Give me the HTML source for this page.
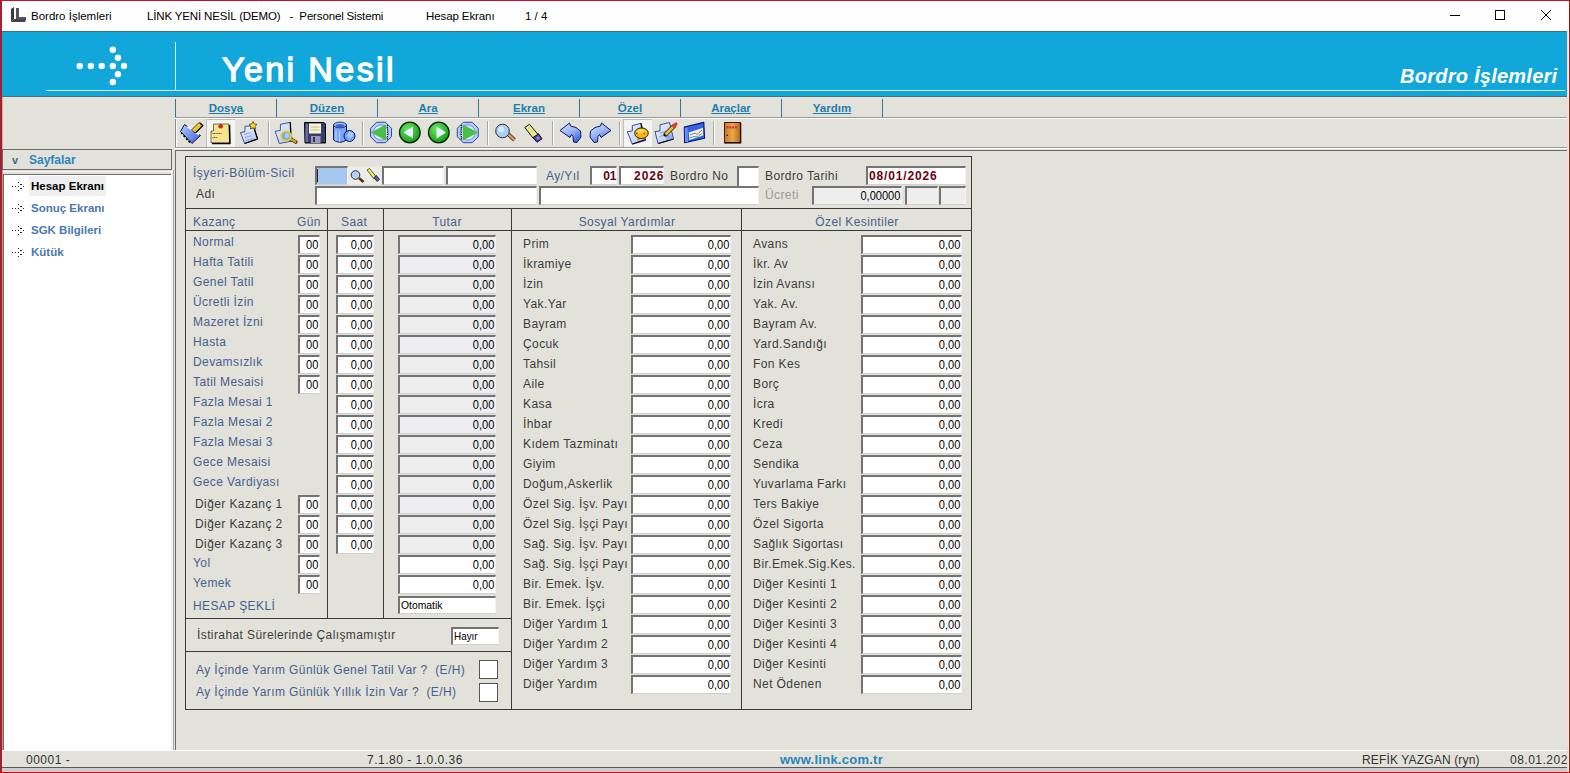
<!DOCTYPE html>
<html><head><meta charset="utf-8"><style>
html,body{margin:0;padding:0;width:1570px;height:773px;overflow:hidden;background:#E2E2DA;font-family:"Liberation Sans",sans-serif;}
.t,.v,.b,.in{position:absolute;white-space:nowrap;}
.t{line-height:1;}
.v{line-height:17px;height:17px;}
.in{border-top:2px solid #737373;border-left:2px solid #737373;border-bottom:1px solid #d0d0d0;border-right:1px solid #f2f2f2;}
</style></head><body>

<div class="b" style="left:0px;top:0px;width:1570px;height:31px;background:#fff"></div>
<svg style="position:absolute;left:10px;top:7px" width="17" height="16" viewBox="0 0 17 16"><path d="M1 2 L4 0 L4 12 L1 15 Z" fill="#3a3a3a"/><path d="M6 1 L9 1 L9 10 L16 10 L16 13 L6 13 Z" fill="#555"/><path d="M1 15 L4 12 L16 12 L15 15 Z" fill="#444"/></svg>
<div class="t " style="left:31px;top:11px;font-size:11.5px;color:#000;font-weight:normal;letter-spacing:0px;">Bordro İşlemleri</div>
<div class="t " style="left:147px;top:11px;font-size:11.5px;color:#000;font-weight:normal;letter-spacing:-0.15px;">LİNK YENİ NESİL (DEMO)&nbsp;&nbsp; -&nbsp; Personel Sistemi</div>
<div class="t " style="left:426px;top:11px;font-size:11.5px;color:#000;font-weight:normal;letter-spacing:-0.1px;">Hesap Ekranı</div>
<div class="t " style="left:525px;top:11px;font-size:11.5px;color:#000;font-weight:normal;letter-spacing:0px;">1 / 4</div>
<div class="b" style="left:1450px;top:15px;width:10px;height:1px;background:#000"></div>
<div class="b" style="left:1495px;top:10px;width:8px;height:8px;border:1px solid #000"></div>
<svg style="position:absolute;left:1541px;top:10px" width="11" height="11" viewBox="0 0 11 11"><path d="M0 0 L10 10 M10 0 L0 10" stroke="#000" stroke-width="1"/></svg>
<div class="b" style="left:0px;top:31px;width:1570px;height:1px;background:#3d6f86"></div>
<div class="b" style="left:0px;top:32px;width:1570px;height:64px;background:#11A7DA"></div>
<div class="b" style="left:46px;top:90px;width:1519px;height:1px;background:#C4F8FF"></div>
<div class="b" style="left:46px;top:91px;width:1519px;height:1px;background:#2A98BC"></div>
<div class="b" style="left:2px;top:96px;width:1566px;height:1px;background:#4E6E7A"></div>
<div class="b" style="left:175px;top:42px;width:1px;height:48px;background:#D8F8FF"></div>
<svg style="position:absolute;left:0;top:0" width="200" height="96"><circle cx="79.7" cy="66" r="3.2" fill="#fff"/><circle cx="90.8" cy="66" r="3.2" fill="#fff"/><circle cx="101.7" cy="66" r="3.2" fill="#fff"/><circle cx="112.8" cy="66" r="3.2" fill="#fff"/><circle cx="124" cy="66" r="3.2" fill="#fff"/><circle cx="112.8" cy="49.7" r="3.2" fill="#fff"/><circle cx="117.9" cy="57.8" r="3.2" fill="#fff"/><circle cx="117.9" cy="74.3" r="3.2" fill="#fff"/><circle cx="112.8" cy="82" r="3.2" fill="#fff"/></svg>
<div class="t" style="left:222px;top:52px;font-size:34px;color:#fff;font-weight:normal;letter-spacing:2.4px;-webkit-text-stroke:1.3px #fff;line-height:1">Yeni Nesil</div>
<div class="t " style="left:1400px;top:66px;font-size:20px;color:#fff;font-weight:bold;letter-spacing:0.25px;font-style:italic">Bordro İşlemleri</div>
<div class="b" style="left:2px;top:97px;width:1566px;height:20px;background:#E2E2DA"></div>
<div class="b" style="left:175px;top:117px;width:1393px;height:1px;background:#9a9a9a"></div>
<div class="b" style="left:175px;top:118px;width:1393px;height:1px;background:#ffffff"></div>
<div class="b" style="left:175px;top:99px;width:1px;height:18px;background:#2F7896"></div>
<div class="b" style="left:276px;top:99px;width:1px;height:18px;background:#2F7896"></div>
<div class="b" style="left:377px;top:99px;width:1px;height:18px;background:#2F7896"></div>
<div class="b" style="left:478px;top:99px;width:1px;height:18px;background:#2F7896"></div>
<div class="b" style="left:579px;top:99px;width:1px;height:18px;background:#2F7896"></div>
<div class="b" style="left:680px;top:99px;width:1px;height:18px;background:#2F7896"></div>
<div class="b" style="left:781px;top:99px;width:1px;height:18px;background:#2F7896"></div>
<div class="b" style="left:882px;top:99px;width:1px;height:18px;background:#2F7896"></div>
<div class="t" style="left:176px;width:100px;text-align:center;top:103px;font-size:11.5px;font-weight:bold;color:#1F7DAE;text-decoration:underline">Dosya</div>
<div class="t" style="left:277px;width:100px;text-align:center;top:103px;font-size:11.5px;font-weight:bold;color:#1F7DAE;text-decoration:underline">Düzen</div>
<div class="t" style="left:378px;width:100px;text-align:center;top:103px;font-size:11.5px;font-weight:bold;color:#1F7DAE;text-decoration:underline">Ara</div>
<div class="t" style="left:479px;width:100px;text-align:center;top:103px;font-size:11.5px;font-weight:bold;color:#1F7DAE;text-decoration:underline">Ekran</div>
<div class="t" style="left:580px;width:100px;text-align:center;top:103px;font-size:11.5px;font-weight:bold;color:#1F7DAE;text-decoration:underline">Özel</div>
<div class="t" style="left:681px;width:100px;text-align:center;top:103px;font-size:11.5px;font-weight:bold;color:#1F7DAE;text-decoration:underline">Araçlar</div>
<div class="t" style="left:782px;width:100px;text-align:center;top:103px;font-size:11.5px;font-weight:bold;color:#1F7DAE;text-decoration:underline">Yardım</div>
<div class="b" style="left:175px;top:119px;width:1393px;height:28px;background:#E2E2DA"></div>
<div class="b" style="left:175px;top:119px;width:1px;height:29px;background:#8a8a8a"></div>
<div class="b" style="left:176px;top:119px;width:1px;height:28px;background:#ffffff"></div>
<div class="b" style="left:175px;top:147px;width:1393px;height:1px;background:#9a9a9a"></div>
<div class="b" style="left:175px;top:148px;width:1393px;height:1px;background:#ffffff"></div>
<div class="b" style="left:268px;top:121px;width:1px;height:24px;background:#a8a8a8"></div>
<div class="b" style="left:269px;top:121px;width:1px;height:24px;background:#ffffff"></div>
<div class="b" style="left:362px;top:121px;width:1px;height:24px;background:#a8a8a8"></div>
<div class="b" style="left:363px;top:121px;width:1px;height:24px;background:#ffffff"></div>
<div class="b" style="left:487px;top:121px;width:1px;height:24px;background:#a8a8a8"></div>
<div class="b" style="left:488px;top:121px;width:1px;height:24px;background:#ffffff"></div>
<div class="b" style="left:552px;top:121px;width:1px;height:24px;background:#a8a8a8"></div>
<div class="b" style="left:553px;top:121px;width:1px;height:24px;background:#ffffff"></div>
<div class="b" style="left:619px;top:121px;width:1px;height:24px;background:#a8a8a8"></div>
<div class="b" style="left:620px;top:121px;width:1px;height:24px;background:#ffffff"></div>
<div class="b" style="left:713px;top:121px;width:1px;height:24px;background:#a8a8a8"></div>
<div class="b" style="left:714px;top:121px;width:1px;height:24px;background:#ffffff"></div>
<div class="b" style="left:206px;top:119px;width:28px;height:27px;background:#F4F4F2;border-left:1px solid #c0c0c0;border-top:1px solid #c0c0c0"></div>
<div class="b" style="left:623px;top:119px;width:28px;height:27px;background:#F4F4F2;border-left:1px solid #c0c0c0;border-top:1px solid #c0c0c0"></div>
<svg style="position:absolute;left:0;top:0" width="760" height="150" viewBox="0 0 760 150">
<defs>
<linearGradient id="gblue" x1="0" y1="0" x2="1" y2="1"><stop offset="0" stop-color="#B8CCFF"/><stop offset="1" stop-color="#3A5FD8"/></linearGradient>
<linearGradient id="gyel" x1="0" y1="0" x2="1" y2="1"><stop offset="0" stop-color="#FFE860"/><stop offset="1" stop-color="#E0A000"/></linearGradient>
<radialGradient id="ggreen" cx="0.4" cy="0.35" r="0.7"><stop offset="0" stop-color="#6AE86A"/><stop offset="1" stop-color="#109A10"/></radialGradient>
<radialGradient id="gring" cx="0.5" cy="0.5" r="0.5"><stop offset="0.75" stop-color="#C8D8F8"/><stop offset="1" stop-color="#4A6AD0"/></radialGradient>
<linearGradient id="gdoc" x1="0" y1="0" x2="1" y2="1"><stop offset="0" stop-color="#F4F8FF"/><stop offset="1" stop-color="#A8C0F0"/></linearGradient>
<linearGradient id="gdoor" x1="0" y1="0" x2="1" y2="0"><stop offset="0" stop-color="#C87818"/><stop offset="0.5" stop-color="#E8A848"/><stop offset="1" stop-color="#B86810"/></linearGradient>
</defs>
<!-- 1 brush -->
<path d="M184.5 124.5 L200.5 135.5 L192 143.5 L180.5 131.5 Z" fill="url(#gblue)" stroke="#101840" stroke-width="1"/>
<path d="M187.5 126.5 L199 134.5" stroke="#F4F8FF" stroke-width="1.8"/>
<path d="M181 132.5 L182.5 134 M183.5 135.5 L185 137 M186 138.5 L187.5 140 M188.5 141 L190 142.5" stroke="#000" stroke-width="1.6"/>
<path d="M191.5 130 L199 122.5 L202.5 125.5 L195 133 Z" fill="url(#gyel)" stroke="#201800" stroke-width="0.8"/>
<path d="M200 123 L202.8 125.6 L196 132.5" fill="none" stroke="#000" stroke-width="1.2"/>
<!-- 2 sticky note -->
<path d="M213.5 124 L229 124 L229.5 143 L211 143 L211 131 L213.5 131 Z" fill="#F6E48C" stroke="#222" stroke-width="0.6"/>
<path d="M229.5 125 L230 143.5 L212 143.5" fill="none" stroke="#000" stroke-width="1.5"/>
<circle cx="220.7" cy="126.3" r="2" fill="#E02818" stroke="#901008" stroke-width="0.5"/>
<path d="M212.5 133.5 L221.5 133.5 M212.5 137.5 L217.5 137.5" stroke="#333" stroke-width="0.9" stroke-dasharray="1 0.6"/>
<!-- 3 doc star -->
<path d="M240.5 132.5 L244.8 131.8 L245 126.3 L250 126 L254.4 129.2 L257.6 139 L244.6 143.5 Z" fill="url(#gdoc)" stroke="#3040A8" stroke-width="0.9" stroke-linejoin="round"/>
<path d="M254.4 129.2 L257.6 139 L244.6 143.5" fill="none" stroke="#000" stroke-width="1.3" stroke-linejoin="round"/>
<path d="M244 134.5 L251 132.5 M245 137.5 L252 135.5 M246 140.5 L253 138.5" stroke="#6878C8" stroke-width="0.9" stroke-dasharray="1.5 0.8"/>
<path d="M253 121.5 L254.2 124 L257 124.4 L255 126.3 L255.5 129 L253 127.7 L250.5 129 L251 126.3 L249 124.4 L251.8 124 Z" fill="#FFE020" stroke="#403000" stroke-width="0.7"/>
<!-- 4 doc magnifier -->
<path d="M275.2 131.2 L280.3 130.5 L280.5 124.3 L290.3 122.3 L290.8 134 L293 141 L279.3 143.5 Z" fill="url(#gdoc)" stroke="#3040A8" stroke-width="0.9" stroke-linejoin="round"/>
<path d="M290.3 122.3 L290.8 134" stroke="#000" stroke-width="1.3"/>
<path d="M289.5 138.5 L295.8 142" stroke="#3A2000" stroke-width="3.6" stroke-linecap="round"/>
<path d="M289.5 138.5 L295.5 141.8" stroke="#E8A030" stroke-width="2.2" stroke-linecap="round"/>
<ellipse cx="286" cy="136" rx="5" ry="4.6" fill="#78A8F0" stroke="#E8D020" stroke-width="1.8"/>
<ellipse cx="287" cy="135.5" rx="2.2" ry="2.6" fill="#A8D0FF"/>
<!-- 5 floppy -->
<path d="M304.5 122.5 L324 122.5 L325.5 124 L325.5 143 L305 143 Z" fill="#3A3A6C" stroke="#000" stroke-width="1"/><rect x="305.5" y="124" width="2.5" height="18" fill="#6A6AA8"/>
<rect x="309" y="123.5" width="12" height="10" fill="#F6F4D0"/>
<path d="M310.5 127 L319.5 127 M310.5 130 L319.5 130" stroke="#B0B080" stroke-width="0.8"/>
<rect x="311" y="136" width="9.5" height="7" fill="#9A9AB8"/>
<rect x="313" y="137" width="2" height="5" fill="#2C2C58"/>
<!-- 6 db globe -->
<path d="M333.5 125 L333.5 140 Q340 144.5 346.5 140 L346.5 125 Z" fill="#78A4FC" stroke="#0A1660" stroke-width="1"/>
<ellipse cx="340" cy="125" rx="6.5" ry="2.8" fill="#A8C4FF" stroke="#102060" stroke-width="0.9"/><ellipse cx="340" cy="125.6" rx="4.5" ry="1.6" fill="#3A60D8"/><path d="M336 130 L336 141 M339.5 131 L339.5 142" stroke="#C0D4FF" stroke-width="1"/>
<circle cx="349.5" cy="136" r="5.5" fill="#7098F4" stroke="#0A1660" stroke-width="1"/><circle cx="350.5" cy="135" r="2.8" fill="#A8D0FF"/>
<path d="M346 136 L353 136 M349.5 131 Q347 136 349.5 141 Q352 136 349.5 131" stroke="#B0C8FF" stroke-width="0.7" fill="none"/>
<!-- 7 first -->
<path d="M376.5 122.3 L385.5 122.3 L391.5 128.3 L391.5 136.7 L385.5 142.7 L376.5 142.7 L370.5 136.7 L370.5 128.3 Z" fill="#B8CCF4" stroke="#2A48B0" stroke-width="1"/>
<circle cx="381" cy="132.5" r="7.6" fill="#D8E4FA" stroke="#7890D8" stroke-width="1"/>
<path d="M370.8 132.5 L386 124.5 L386 140.5 Z" fill="#48C048"/>
<path d="M387.5 125 L387.5 140" stroke="#000" stroke-width="1.2" stroke-dasharray="1.2 1"/>
<!-- 8 prev -->
<circle cx="409.8" cy="132.5" r="10.3" fill="url(#ggreen)" stroke="#082808" stroke-width="1.3"/>
<path d="M403.5 132.5 L413 126.5 L413 138.5 Z" fill="#E8F0FF"/>
<!-- 9 next -->
<circle cx="438.8" cy="132.5" r="10.3" fill="url(#ggreen)" stroke="#082808" stroke-width="1.3"/>
<path d="M446 132.5 L436.5 126.5 L436.5 138.5 Z" fill="#E8F0FF"/>
<!-- 10 last -->
<path d="M463.3 122.3 L472.3 122.3 L478.3 128.3 L478.3 136.7 L472.3 142.7 L463.3 142.7 L457.3 136.7 L457.3 128.3 Z" fill="#B8CCF4" stroke="#2A48B0" stroke-width="1"/>
<circle cx="467.8" cy="132.5" r="7.6" fill="#D8E4FA" stroke="#7890D8" stroke-width="1"/>
<path d="M478 132.5 L462.8 124.5 L462.8 140.5 Z" fill="#48C048"/>
<path d="M461.3 125 L461.3 140" stroke="#000" stroke-width="1.2" stroke-dasharray="1.2 1"/>
<!-- 11 magnifier -->
<path d="M508 134 L514.5 140" stroke="#6A3A10" stroke-width="4"/>
<path d="M508 134 L514.5 140" stroke="#D8A070" stroke-width="2.2"/>
<circle cx="502.5" cy="131" r="6.8" fill="#A8D0F8" stroke="#303030" stroke-width="1"/>
<circle cx="501" cy="129.5" r="3" fill="#D8ECFF"/>
<!-- 12 flashlight -->
<path d="M524.8 127.5 L529.5 124.3 L538.3 134.8 L533.2 138.3 Z" fill="#F0F070" stroke="#101030" stroke-width="1" stroke-linejoin="round"/>
<path d="M527.5 129 L530 127.2 M530.5 132.5 L533.5 130.5" stroke="#C8B8F0" stroke-width="1"/>
<path d="M533 137.5 L538.5 133.8 L542 138.8 L537 142.3 Z" fill="#4A4AA0" stroke="#0A0A30" stroke-width="1" stroke-linejoin="round"/>
<circle cx="538" cy="138" r="1.5" fill="#9A9AB0"/>
<!-- 13 undo -->
<linearGradient id="garr" x1="0" y1="0" x2="0.6" y2="1"><stop offset="0" stop-color="#D4E6FF"/><stop offset="0.55" stop-color="#9AB8F8"/><stop offset="1" stop-color="#4A6AE0"/></linearGradient>
<path d="M560 130.5 L569.5 123 L570.5 126 L576 127.5 L580.5 131 L581 137 L577 142.5 L573.5 142 L573 136.5 L571.5 134.5 L570 137.5 Z" fill="url(#garr)" stroke="#0E1660" stroke-width="1" stroke-linejoin="round"/>
<!-- 14 redo -->
<path d="M611 130.5 L601.5 123 L600.5 126 L595 127.5 L590.5 131 L590 137 L594 142.5 L597.5 142 L598 136.5 L599.5 134.5 L601 137.5 Z" fill="url(#garr)" stroke="#0E1660" stroke-width="1" stroke-linejoin="round"/>
<!-- 15 printer speech -->
<path d="M627.3 131.6 L632.3 131 L632.3 125.6 L641 123.3 L642.2 127.4 L645.7 140.4 L632.3 144.2 Z" fill="url(#gdoc)" stroke="#2838A0" stroke-width="0.9" stroke-linejoin="round"/>
<path d="M641 123.3 L642.2 131" stroke="#000" stroke-width="1.2"/>
<path d="M645.5 139.5 L632.5 144" stroke="#000" stroke-width="1.3"/>
<path d="M638 137.5 L637 141 L641 138.5 Z" fill="#E08010"/>
<ellipse cx="641.5" cy="133.2" rx="6.8" ry="5.3" fill="#F8B818" stroke="#201000" stroke-width="0.9"/>
<ellipse cx="641" cy="131.5" rx="4" ry="2.2" fill="#FFE040"/>
<rect x="636" y="132.5" width="1.6" height="1.8" fill="#C05000"/><rect x="643.3" y="132.5" width="1.6" height="1.8" fill="#C05000"/>
<!-- 16 doc pencil -->
<path d="M655 131.5 L660 131 L660 124.8 L669.5 122.5 L673.5 139 L658 143.5 Z" fill="url(#gdoc)" stroke="#2838A0" stroke-width="0.9" stroke-linejoin="round"/>
<path d="M673.5 139 L658.5 143.5" stroke="#000" stroke-width="1.3"/>
<rect x="666" y="135" width="6" height="4.5" fill="#90A8F0" transform="rotate(-15 669 137)"/>
<path d="M660 133 L666 131.5 M659.5 136.5 L665 135" stroke="#7090D0" stroke-width="0.8"/>
<path d="M665.5 134.5 L674 126" stroke="#1A1000" stroke-width="4.2" stroke-linecap="round"/>
<path d="M665.5 134.5 L674 126" stroke="#F0C020" stroke-width="2.8"/>
<path d="M673.8 126.2 L676 124" stroke="#E83838" stroke-width="3.2" stroke-linecap="round"/>
<!-- 17 window -->
<path d="M684.3 127 L703.8 122.4 L704.6 138.3 L684.6 142.6 Z" fill="#3462E4" stroke="#0A1470" stroke-width="1.1" stroke-linejoin="round"/>
<path d="M684.8 128 L687.5 127.5 L688 141.8 L685 142.3 Z" fill="#6A90F8"/>
<path d="M688.8 132.4 L703 127.8 L703.2 135.6 L689.5 140 Z" fill="#E8F4FF"/>
<path d="M690 135 L695 133 L697 134.5 L702 130" stroke="#E05878" stroke-width="1" fill="none"/>
<path d="M690 138 L694 136.5 L697 137 L702 133.5" stroke="#40B060" stroke-width="1" fill="none"/>
<!-- 18 exit door -->
<rect x="724.5" y="122.5" width="16" height="20.5" fill="url(#gdoor)" stroke="#3A1C00" stroke-width="1"/>
<path d="M725 142.6 L740.6 142.6 L740.6 123" fill="none" stroke="#201000" stroke-width="1.4"/>
<path d="M726.5 127.3 L737.5 127.3" stroke="#D83048" stroke-width="2.2" stroke-dasharray="2 0.8"/>
<rect x="726.5" y="134.5" width="1.5" height="1.5" fill="#4A2A00"/>
</svg>
<svg style="position:absolute;left:0;top:0" width="400" height="200" viewBox="0 0 400 200">
<rect x="348" y="166.5" width="16.5" height="18" fill="#ECECE8"/>
<rect x="365" y="166.5" width="16.5" height="18" fill="#ECECE8"/>
<path d="M359 178 L363.5 182" stroke="#5A3010" stroke-width="2.6"/>
<circle cx="355.5" cy="175" r="4.3" fill="#B0D4F8" stroke="#202020" stroke-width="0.9"/>
<path d="M367 170 L369.5 168.5 L376.5 177 L374 179 Z" fill="#F0F050" stroke="#303050" stroke-width="0.8"/>
<path d="M374 177.5 L376.5 175.5 L379.5 179.5 L377 181.5 Z" fill="#5A5AA0" stroke="#202040" stroke-width="0.8"/>
</svg>
<div class="b" style="left:2px;top:149px;width:170px;height:21px;background:#E2E2DA;border:1px solid #6a6a6a;box-sizing:border-box"></div>
<div class="t " style="left:12px;top:155px;font-size:11px;color:#2F6F90;font-weight:bold;letter-spacing:0px;">v</div>
<div class="t " style="left:29px;top:154px;font-size:12px;color:#2A88BE;font-weight:bold;letter-spacing:0px;">Sayfalar</div>
<div class="b" style="left:3px;top:174px;width:168px;height:577px;background:#fff;border-top:1px solid #6e6e6e;border-left:1px solid #6e6e6e;box-sizing:border-box"></div>
<div class="b" style="left:171px;top:170px;width:2px;height:580px;background:#F2F2F0"></div>
<div class="b" style="left:173px;top:170px;width:1px;height:580px;background:#A8A8A8"></div>
<div class="b" style="left:3px;top:171px;width:168px;height:1px;background:#F4F4F2"></div>
<div class="b" style="left:29px;top:176px;width:77px;height:20px;background:#EFEFEF"></div>
<div class="t " style="left:31px;top:181px;font-size:11.5px;color:#000;font-weight:bold;letter-spacing:0px;">Hesap Ekranı</div>
<svg style="position:absolute;left:11px;top:181px" width="14" height="11" viewBox="0 0 14 11"><g fill="#222"><rect x="1" y="5" width="1" height="1"/><rect x="4" y="5" width="1" height="1"/><rect x="7" y="5" width="1" height="1"/><rect x="12" y="5" width="1" height="1"/><rect x="7" y="1" width="1" height="1"/><rect x="9" y="3" width="2" height="1"/><rect x="9" y="7" width="2" height="1"/><rect x="7" y="9" width="1" height="1"/></g></svg>
<div class="t " style="left:31px;top:203px;font-size:11.5px;color:#4A7AB0;font-weight:bold;letter-spacing:0px;">Sonuç Ekranı</div>
<svg style="position:absolute;left:11px;top:203px" width="14" height="11" viewBox="0 0 14 11"><g fill="#222"><rect x="1" y="5" width="1" height="1"/><rect x="4" y="5" width="1" height="1"/><rect x="7" y="5" width="1" height="1"/><rect x="12" y="5" width="1" height="1"/><rect x="7" y="1" width="1" height="1"/><rect x="9" y="3" width="2" height="1"/><rect x="9" y="7" width="2" height="1"/><rect x="7" y="9" width="1" height="1"/></g></svg>
<div class="t " style="left:31px;top:225px;font-size:11.5px;color:#4A7AB0;font-weight:bold;letter-spacing:0px;">SGK Bilgileri</div>
<svg style="position:absolute;left:11px;top:225px" width="14" height="11" viewBox="0 0 14 11"><g fill="#222"><rect x="1" y="5" width="1" height="1"/><rect x="4" y="5" width="1" height="1"/><rect x="7" y="5" width="1" height="1"/><rect x="12" y="5" width="1" height="1"/><rect x="7" y="1" width="1" height="1"/><rect x="9" y="3" width="2" height="1"/><rect x="9" y="7" width="2" height="1"/><rect x="7" y="9" width="1" height="1"/></g></svg>
<div class="t " style="left:31px;top:247px;font-size:11.5px;color:#4A7AB0;font-weight:bold;letter-spacing:0px;">Kütük</div>
<svg style="position:absolute;left:11px;top:247px" width="14" height="11" viewBox="0 0 14 11"><g fill="#222"><rect x="1" y="5" width="1" height="1"/><rect x="4" y="5" width="1" height="1"/><rect x="7" y="5" width="1" height="1"/><rect x="12" y="5" width="1" height="1"/><rect x="7" y="1" width="1" height="1"/><rect x="9" y="3" width="2" height="1"/><rect x="9" y="7" width="2" height="1"/><rect x="7" y="9" width="1" height="1"/></g></svg>
<div class="b" style="left:175px;top:150px;width:1393px;height:1px;background:#6a6a6a"></div>
<div class="b" style="left:175px;top:150px;width:1px;height:600px;background:#6a6a6a"></div>
<div class="b" style="left:185px;top:156px;width:787px;height:1px;background:#3a3a3a"></div>
<div class="b" style="left:185px;top:709px;width:787px;height:1px;background:#3a3a3a"></div>
<div class="b" style="left:185px;top:156px;width:1px;height:554px;background:#3a3a3a"></div>
<div class="b" style="left:971px;top:156px;width:1px;height:554px;background:#3a3a3a"></div>
<div class="b" style="left:185px;top:208px;width:787px;height:1px;background:#3a3a3a"></div>
<div class="b" style="left:185px;top:230px;width:787px;height:1px;background:#3a3a3a"></div>
<div class="b" style="left:327px;top:208px;width:1px;height:411px;background:#3a3a3a"></div>
<div class="b" style="left:383px;top:208px;width:1px;height:411px;background:#3a3a3a"></div>
<div class="b" style="left:511px;top:208px;width:1px;height:502px;background:#3a3a3a"></div>
<div class="b" style="left:741px;top:208px;width:1px;height:502px;background:#3a3a3a"></div>
<div class="b" style="left:185px;top:618px;width:327px;height:1px;background:#3a3a3a"></div>
<div class="b" style="left:185px;top:651px;width:327px;height:1px;background:#3a3a3a"></div>
<div class="t" style="left:193px;top:167px;font-size:12px;color:#45618F;letter-spacing:0.4px;letter-spacing:0.5px">İşyeri-Bölüm-Sicil</div>
<div class="t" style="left:196px;top:188px;font-size:12px;color:#3C3C3C;letter-spacing:0.4px;">Adı</div>
<div class="in" style="left:315px;top:166px;width:30px;height:16px;background:#A6C8F0"></div>
<div class="b" style="left:317px;top:169px;width:1px;height:13px;background:#222"></div>
<div class="in" style="left:382px;top:166px;width:59px;height:16px;background:#fff"></div>
<div class="in" style="left:446px;top:166px;width:88px;height:16px;background:#fff"></div>
<div class="t" style="left:546px;top:170px;font-size:12px;color:#45618F;letter-spacing:0.4px;">Ay/Yıl</div>
<div class="in" style="left:590px;top:166px;width:24px;height:16px;background:#fff"></div>
<div class="v" style="right:953.5px;top:168px;font-size:12px;color:#6E0010;font-weight:bold;letter-spacing:0px;transform:scaleX(1.0);transform-origin:right">01</div>
<div class="in" style="left:619px;top:166px;width:42px;height:16px;background:#fff"></div>
<div class="v" style="right:905.6px;top:168px;font-size:12px;color:#6E0010;font-weight:bold;letter-spacing:0.9px;transform:scaleX(1.0);transform-origin:right">2026</div>
<div class="t" style="left:670px;top:170px;font-size:12px;color:#3C3C3C;letter-spacing:0.4px;">Bordro No</div>
<div class="in" style="left:737px;top:166px;width:19px;height:18px;background:#fff"></div>
<div class="t" style="left:765px;top:170px;font-size:12px;color:#3C3C3C;letter-spacing:0.4px;">Bordro Tarihi</div>
<div class="in" style="left:866px;top:166px;width:97px;height:16px;background:#fff"></div>
<div class="v" style="left:869px;top:168px;font-size:12px;color:#6E0010;font-weight:bold;letter-spacing:0.85px;transform:scaleX(1.0);transform-origin:left">08/01/2026</div>
<div class="in" style="left:315px;top:186px;width:219px;height:16px;background:#fff"></div>
<div class="in" style="left:539px;top:186px;width:217px;height:16px;background:#fff"></div>
<div class="t" style="left:765px;top:189px;font-size:12px;color:#9a9a9a;letter-spacing:0.4px;">Ücreti</div>
<div class="in" style="left:812px;top:186px;width:87px;height:16px;background:#EEEEEE"></div>
<div class="v" style="right:670px;top:188px;font-size:12px;color:#000;font-weight:normal;letter-spacing:0px;transform:scaleX(0.92);transform-origin:right">0,00000</div>
<div class="in" style="left:905px;top:186px;width:30px;height:16px;background:#EEEEEE"></div>
<div class="in" style="left:939px;top:186px;width:24px;height:16px;background:#EEEEEE"></div>
<div class="t" style="left:193px;top:216px;font-size:12px;color:#45618F;letter-spacing:0.4px;">Kazanç</div>
<div class="t" style="left:297px;top:216px;font-size:12px;color:#45618F;letter-spacing:0.4px;">Gün</div>
<div class="t" style="left:341px;top:216px;font-size:12px;color:#45618F;letter-spacing:0.4px;">Saat</div>
<div class="t" style="left:347px;width:200px;text-align:center;top:216px;font-size:12px;color:#45618F;letter-spacing:0.4px">Tutar</div>
<div class="t" style="left:527px;width:200px;text-align:center;top:216px;font-size:12px;color:#45618F;letter-spacing:0.4px">Sosyal Yardımlar</div>
<div class="t" style="left:757px;width:200px;text-align:center;top:216px;font-size:12px;color:#45618F;letter-spacing:0.4px">Özel Kesintiler</div>
<div class="t" style="left:193px;top:236px;font-size:12px;color:#45618F;letter-spacing:0.4px;">Normal</div>
<div class="in" style="left:298px;top:235px;width:19px;height:16px;background:#fff"></div>
<div class="v" style="right:1252px;top:237px;font-size:12px;color:#000;font-weight:normal;letter-spacing:0px;transform:scaleX(0.92);transform-origin:right">00</div>
<div class="in" style="left:336px;top:235px;width:35px;height:16px;background:#fff"></div>
<div class="v" style="right:1198px;top:237px;font-size:12px;color:#000;font-weight:normal;letter-spacing:0px;transform:scaleX(0.92);transform-origin:right">0,00</div>
<div class="in" style="left:398px;top:235px;width:95px;height:16px;background:#EEEEF0"></div>
<div class="v" style="right:1076px;top:237px;font-size:12px;color:#000;font-weight:normal;letter-spacing:0px;transform:scaleX(0.92);transform-origin:right">0,00</div>
<div class="t" style="left:193px;top:256px;font-size:12px;color:#45618F;letter-spacing:0.4px;">Hafta Tatili</div>
<div class="in" style="left:298px;top:255px;width:19px;height:16px;background:#fff"></div>
<div class="v" style="right:1252px;top:257px;font-size:12px;color:#000;font-weight:normal;letter-spacing:0px;transform:scaleX(0.92);transform-origin:right">00</div>
<div class="in" style="left:336px;top:255px;width:35px;height:16px;background:#fff"></div>
<div class="v" style="right:1198px;top:257px;font-size:12px;color:#000;font-weight:normal;letter-spacing:0px;transform:scaleX(0.92);transform-origin:right">0,00</div>
<div class="in" style="left:398px;top:255px;width:95px;height:16px;background:#EEEEF0"></div>
<div class="v" style="right:1076px;top:257px;font-size:12px;color:#000;font-weight:normal;letter-spacing:0px;transform:scaleX(0.92);transform-origin:right">0,00</div>
<div class="t" style="left:193px;top:276px;font-size:12px;color:#45618F;letter-spacing:0.4px;">Genel Tatil</div>
<div class="in" style="left:298px;top:275px;width:19px;height:16px;background:#fff"></div>
<div class="v" style="right:1252px;top:277px;font-size:12px;color:#000;font-weight:normal;letter-spacing:0px;transform:scaleX(0.92);transform-origin:right">00</div>
<div class="in" style="left:336px;top:275px;width:35px;height:16px;background:#fff"></div>
<div class="v" style="right:1198px;top:277px;font-size:12px;color:#000;font-weight:normal;letter-spacing:0px;transform:scaleX(0.92);transform-origin:right">0,00</div>
<div class="in" style="left:398px;top:275px;width:95px;height:16px;background:#EEEEF0"></div>
<div class="v" style="right:1076px;top:277px;font-size:12px;color:#000;font-weight:normal;letter-spacing:0px;transform:scaleX(0.92);transform-origin:right">0,00</div>
<div class="t" style="left:193px;top:296px;font-size:12px;color:#45618F;letter-spacing:0.4px;">Ücretli İzin</div>
<div class="in" style="left:298px;top:295px;width:19px;height:16px;background:#fff"></div>
<div class="v" style="right:1252px;top:297px;font-size:12px;color:#000;font-weight:normal;letter-spacing:0px;transform:scaleX(0.92);transform-origin:right">00</div>
<div class="in" style="left:336px;top:295px;width:35px;height:16px;background:#fff"></div>
<div class="v" style="right:1198px;top:297px;font-size:12px;color:#000;font-weight:normal;letter-spacing:0px;transform:scaleX(0.92);transform-origin:right">0,00</div>
<div class="in" style="left:398px;top:295px;width:95px;height:16px;background:#EEEEF0"></div>
<div class="v" style="right:1076px;top:297px;font-size:12px;color:#000;font-weight:normal;letter-spacing:0px;transform:scaleX(0.92);transform-origin:right">0,00</div>
<div class="t" style="left:193px;top:316px;font-size:12px;color:#45618F;letter-spacing:0.4px;">Mazeret İzni</div>
<div class="in" style="left:298px;top:315px;width:19px;height:16px;background:#fff"></div>
<div class="v" style="right:1252px;top:317px;font-size:12px;color:#000;font-weight:normal;letter-spacing:0px;transform:scaleX(0.92);transform-origin:right">00</div>
<div class="in" style="left:336px;top:315px;width:35px;height:16px;background:#fff"></div>
<div class="v" style="right:1198px;top:317px;font-size:12px;color:#000;font-weight:normal;letter-spacing:0px;transform:scaleX(0.92);transform-origin:right">0,00</div>
<div class="in" style="left:398px;top:315px;width:95px;height:16px;background:#EEEEF0"></div>
<div class="v" style="right:1076px;top:317px;font-size:12px;color:#000;font-weight:normal;letter-spacing:0px;transform:scaleX(0.92);transform-origin:right">0,00</div>
<div class="t" style="left:193px;top:336px;font-size:12px;color:#45618F;letter-spacing:0.4px;">Hasta</div>
<div class="in" style="left:298px;top:335px;width:19px;height:16px;background:#fff"></div>
<div class="v" style="right:1252px;top:337px;font-size:12px;color:#000;font-weight:normal;letter-spacing:0px;transform:scaleX(0.92);transform-origin:right">00</div>
<div class="in" style="left:336px;top:335px;width:35px;height:16px;background:#fff"></div>
<div class="v" style="right:1198px;top:337px;font-size:12px;color:#000;font-weight:normal;letter-spacing:0px;transform:scaleX(0.92);transform-origin:right">0,00</div>
<div class="in" style="left:398px;top:335px;width:95px;height:16px;background:#EEEEF0"></div>
<div class="v" style="right:1076px;top:337px;font-size:12px;color:#000;font-weight:normal;letter-spacing:0px;transform:scaleX(0.92);transform-origin:right">0,00</div>
<div class="t" style="left:193px;top:356px;font-size:12px;color:#45618F;letter-spacing:0.4px;">Devamsızlık</div>
<div class="in" style="left:298px;top:355px;width:19px;height:16px;background:#fff"></div>
<div class="v" style="right:1252px;top:357px;font-size:12px;color:#000;font-weight:normal;letter-spacing:0px;transform:scaleX(0.92);transform-origin:right">00</div>
<div class="in" style="left:336px;top:355px;width:35px;height:16px;background:#fff"></div>
<div class="v" style="right:1198px;top:357px;font-size:12px;color:#000;font-weight:normal;letter-spacing:0px;transform:scaleX(0.92);transform-origin:right">0,00</div>
<div class="in" style="left:398px;top:355px;width:95px;height:16px;background:#EEEEF0"></div>
<div class="v" style="right:1076px;top:357px;font-size:12px;color:#000;font-weight:normal;letter-spacing:0px;transform:scaleX(0.92);transform-origin:right">0,00</div>
<div class="t" style="left:193px;top:376px;font-size:12px;color:#45618F;letter-spacing:0.4px;">Tatil Mesaisi</div>
<div class="in" style="left:298px;top:375px;width:19px;height:16px;background:#fff"></div>
<div class="v" style="right:1252px;top:377px;font-size:12px;color:#000;font-weight:normal;letter-spacing:0px;transform:scaleX(0.92);transform-origin:right">00</div>
<div class="in" style="left:336px;top:375px;width:35px;height:16px;background:#fff"></div>
<div class="v" style="right:1198px;top:377px;font-size:12px;color:#000;font-weight:normal;letter-spacing:0px;transform:scaleX(0.92);transform-origin:right">0,00</div>
<div class="in" style="left:398px;top:375px;width:95px;height:16px;background:#EEEEF0"></div>
<div class="v" style="right:1076px;top:377px;font-size:12px;color:#000;font-weight:normal;letter-spacing:0px;transform:scaleX(0.92);transform-origin:right">0,00</div>
<div class="t" style="left:193px;top:396px;font-size:12px;color:#45618F;letter-spacing:0.4px;">Fazla Mesai 1</div>
<div class="in" style="left:336px;top:395px;width:35px;height:16px;background:#fff"></div>
<div class="v" style="right:1198px;top:397px;font-size:12px;color:#000;font-weight:normal;letter-spacing:0px;transform:scaleX(0.92);transform-origin:right">0,00</div>
<div class="in" style="left:398px;top:395px;width:95px;height:16px;background:#EEEEF0"></div>
<div class="v" style="right:1076px;top:397px;font-size:12px;color:#000;font-weight:normal;letter-spacing:0px;transform:scaleX(0.92);transform-origin:right">0,00</div>
<div class="t" style="left:193px;top:416px;font-size:12px;color:#45618F;letter-spacing:0.4px;">Fazla Mesai 2</div>
<div class="in" style="left:336px;top:415px;width:35px;height:16px;background:#fff"></div>
<div class="v" style="right:1198px;top:417px;font-size:12px;color:#000;font-weight:normal;letter-spacing:0px;transform:scaleX(0.92);transform-origin:right">0,00</div>
<div class="in" style="left:398px;top:415px;width:95px;height:16px;background:#EEEEF0"></div>
<div class="v" style="right:1076px;top:417px;font-size:12px;color:#000;font-weight:normal;letter-spacing:0px;transform:scaleX(0.92);transform-origin:right">0,00</div>
<div class="t" style="left:193px;top:436px;font-size:12px;color:#45618F;letter-spacing:0.4px;">Fazla Mesai 3</div>
<div class="in" style="left:336px;top:435px;width:35px;height:16px;background:#fff"></div>
<div class="v" style="right:1198px;top:437px;font-size:12px;color:#000;font-weight:normal;letter-spacing:0px;transform:scaleX(0.92);transform-origin:right">0,00</div>
<div class="in" style="left:398px;top:435px;width:95px;height:16px;background:#EEEEF0"></div>
<div class="v" style="right:1076px;top:437px;font-size:12px;color:#000;font-weight:normal;letter-spacing:0px;transform:scaleX(0.92);transform-origin:right">0,00</div>
<div class="t" style="left:193px;top:456px;font-size:12px;color:#45618F;letter-spacing:0.4px;">Gece Mesaisi</div>
<div class="in" style="left:336px;top:455px;width:35px;height:16px;background:#fff"></div>
<div class="v" style="right:1198px;top:457px;font-size:12px;color:#000;font-weight:normal;letter-spacing:0px;transform:scaleX(0.92);transform-origin:right">0,00</div>
<div class="in" style="left:398px;top:455px;width:95px;height:16px;background:#EEEEF0"></div>
<div class="v" style="right:1076px;top:457px;font-size:12px;color:#000;font-weight:normal;letter-spacing:0px;transform:scaleX(0.92);transform-origin:right">0,00</div>
<div class="t" style="left:193px;top:476px;font-size:12px;color:#45618F;letter-spacing:0.4px;">Gece Vardiyası</div>
<div class="in" style="left:336px;top:475px;width:35px;height:16px;background:#fff"></div>
<div class="v" style="right:1198px;top:477px;font-size:12px;color:#000;font-weight:normal;letter-spacing:0px;transform:scaleX(0.92);transform-origin:right">0,00</div>
<div class="in" style="left:398px;top:475px;width:95px;height:16px;background:#EEEEF0"></div>
<div class="v" style="right:1076px;top:477px;font-size:12px;color:#000;font-weight:normal;letter-spacing:0px;transform:scaleX(0.92);transform-origin:right">0,00</div>
<div class="t" style="left:195px;top:498px;font-size:12px;color:#3C3C3C;letter-spacing:0.4px;">Diğer Kazanç 1</div>
<div class="in" style="left:298px;top:495px;width:19px;height:16px;background:#fff"></div>
<div class="v" style="right:1252px;top:497px;font-size:12px;color:#000;font-weight:normal;letter-spacing:0px;transform:scaleX(0.92);transform-origin:right">00</div>
<div class="in" style="left:336px;top:495px;width:35px;height:16px;background:#fff"></div>
<div class="v" style="right:1198px;top:497px;font-size:12px;color:#000;font-weight:normal;letter-spacing:0px;transform:scaleX(0.92);transform-origin:right">0,00</div>
<div class="in" style="left:398px;top:495px;width:95px;height:16px;background:#EEEEF0"></div>
<div class="v" style="right:1076px;top:497px;font-size:12px;color:#000;font-weight:normal;letter-spacing:0px;transform:scaleX(0.92);transform-origin:right">0,00</div>
<div class="t" style="left:195px;top:518px;font-size:12px;color:#3C3C3C;letter-spacing:0.4px;">Diğer Kazanç 2</div>
<div class="in" style="left:298px;top:515px;width:19px;height:16px;background:#fff"></div>
<div class="v" style="right:1252px;top:517px;font-size:12px;color:#000;font-weight:normal;letter-spacing:0px;transform:scaleX(0.92);transform-origin:right">00</div>
<div class="in" style="left:336px;top:515px;width:35px;height:16px;background:#fff"></div>
<div class="v" style="right:1198px;top:517px;font-size:12px;color:#000;font-weight:normal;letter-spacing:0px;transform:scaleX(0.92);transform-origin:right">0,00</div>
<div class="in" style="left:398px;top:515px;width:95px;height:16px;background:#EEEEF0"></div>
<div class="v" style="right:1076px;top:517px;font-size:12px;color:#000;font-weight:normal;letter-spacing:0px;transform:scaleX(0.92);transform-origin:right">0,00</div>
<div class="t" style="left:195px;top:538px;font-size:12px;color:#3C3C3C;letter-spacing:0.4px;">Diğer Kazanç 3</div>
<div class="in" style="left:298px;top:535px;width:19px;height:16px;background:#fff"></div>
<div class="v" style="right:1252px;top:537px;font-size:12px;color:#000;font-weight:normal;letter-spacing:0px;transform:scaleX(0.92);transform-origin:right">00</div>
<div class="in" style="left:336px;top:535px;width:35px;height:16px;background:#fff"></div>
<div class="v" style="right:1198px;top:537px;font-size:12px;color:#000;font-weight:normal;letter-spacing:0px;transform:scaleX(0.92);transform-origin:right">0,00</div>
<div class="in" style="left:398px;top:535px;width:95px;height:16px;background:#EEEEF0"></div>
<div class="v" style="right:1076px;top:537px;font-size:12px;color:#000;font-weight:normal;letter-spacing:0px;transform:scaleX(0.92);transform-origin:right">0,00</div>
<div class="t" style="left:193px;top:557px;font-size:12px;color:#45618F;letter-spacing:0.4px;">Yol</div>
<div class="in" style="left:298px;top:555px;width:19px;height:16px;background:#fff"></div>
<div class="v" style="right:1252px;top:557px;font-size:12px;color:#000;font-weight:normal;letter-spacing:0px;transform:scaleX(0.92);transform-origin:right">00</div>
<div class="in" style="left:398px;top:555px;width:95px;height:16px;background:#fff"></div>
<div class="v" style="right:1076px;top:557px;font-size:12px;color:#000;font-weight:normal;letter-spacing:0px;transform:scaleX(0.92);transform-origin:right">0,00</div>
<div class="t" style="left:193px;top:577px;font-size:12px;color:#45618F;letter-spacing:0.4px;">Yemek</div>
<div class="in" style="left:298px;top:575px;width:19px;height:16px;background:#fff"></div>
<div class="v" style="right:1252px;top:577px;font-size:12px;color:#000;font-weight:normal;letter-spacing:0px;transform:scaleX(0.92);transform-origin:right">00</div>
<div class="in" style="left:398px;top:575px;width:95px;height:16px;background:#fff"></div>
<div class="v" style="right:1076px;top:577px;font-size:12px;color:#000;font-weight:normal;letter-spacing:0px;transform:scaleX(0.92);transform-origin:right">0,00</div>
<div class="in" style="left:398px;top:596px;width:95px;height:15px;background:#fff"></div>
<div class="v" style="left:401px;top:597px;font-size:11px;color:#000;font-weight:normal;letter-spacing:0px;transform:scaleX(0.94);transform-origin:left">Otomatik</div>
<div class="t" style="left:193px;top:600px;font-size:12px;color:#45618F;letter-spacing:0.4px;">HESAP ŞEKLİ</div>
<div class="t" style="left:197px;top:629px;font-size:12px;color:#3C3C3C;letter-spacing:0.4px;">İstirahat Sürelerinde Çalışmamıştır</div>
<div class="in" style="left:451px;top:627px;width:45px;height:15px;background:#fff"></div>
<div class="v" style="left:454px;top:628px;font-size:11px;color:#000;font-weight:normal;letter-spacing:0px;transform:scaleX(0.9);transform-origin:left">Hayır</div>
<div class="t" style="left:196px;top:664px;font-size:12px;color:#45618F;letter-spacing:0.4px;">Ay İçinde Yarım Günlük Genel Tatil Var ?&nbsp; (E/H)</div>
<div class="t" style="left:196px;top:686px;font-size:12px;color:#45618F;letter-spacing:0.4px;">Ay İçinde Yarım Günlük Yıllık İzin Var ?&nbsp; (E/H)</div>
<div class="b" style="left:479px;top:660px;width:19px;height:19px;background:#fff;border:1px solid #555;box-sizing:border-box"></div>
<div class="b" style="left:479px;top:683px;width:19px;height:19px;background:#fff;border:1px solid #555;box-sizing:border-box"></div>
<div class="t" style="left:523px;top:238px;font-size:12px;color:#3C3C3C;letter-spacing:0.4px;">Prim</div>
<div class="in" style="left:631px;top:235px;width:97px;height:16px;background:#fff"></div>
<div class="v" style="right:841px;top:237px;font-size:12px;color:#000;font-weight:normal;letter-spacing:0px;transform:scaleX(0.92);transform-origin:right">0,00</div>
<div class="t" style="left:523px;top:258px;font-size:12px;color:#3C3C3C;letter-spacing:0.4px;">İkramiye</div>
<div class="in" style="left:631px;top:255px;width:97px;height:16px;background:#fff"></div>
<div class="v" style="right:841px;top:257px;font-size:12px;color:#000;font-weight:normal;letter-spacing:0px;transform:scaleX(0.92);transform-origin:right">0,00</div>
<div class="t" style="left:523px;top:278px;font-size:12px;color:#3C3C3C;letter-spacing:0.4px;">İzin</div>
<div class="in" style="left:631px;top:275px;width:97px;height:16px;background:#fff"></div>
<div class="v" style="right:841px;top:277px;font-size:12px;color:#000;font-weight:normal;letter-spacing:0px;transform:scaleX(0.92);transform-origin:right">0,00</div>
<div class="t" style="left:523px;top:298px;font-size:12px;color:#3C3C3C;letter-spacing:0.4px;">Yak.Yar</div>
<div class="in" style="left:631px;top:295px;width:97px;height:16px;background:#fff"></div>
<div class="v" style="right:841px;top:297px;font-size:12px;color:#000;font-weight:normal;letter-spacing:0px;transform:scaleX(0.92);transform-origin:right">0,00</div>
<div class="t" style="left:523px;top:318px;font-size:12px;color:#3C3C3C;letter-spacing:0.4px;">Bayram</div>
<div class="in" style="left:631px;top:315px;width:97px;height:16px;background:#fff"></div>
<div class="v" style="right:841px;top:317px;font-size:12px;color:#000;font-weight:normal;letter-spacing:0px;transform:scaleX(0.92);transform-origin:right">0,00</div>
<div class="t" style="left:523px;top:338px;font-size:12px;color:#3C3C3C;letter-spacing:0.4px;">Çocuk</div>
<div class="in" style="left:631px;top:335px;width:97px;height:16px;background:#fff"></div>
<div class="v" style="right:841px;top:337px;font-size:12px;color:#000;font-weight:normal;letter-spacing:0px;transform:scaleX(0.92);transform-origin:right">0,00</div>
<div class="t" style="left:523px;top:358px;font-size:12px;color:#3C3C3C;letter-spacing:0.4px;">Tahsil</div>
<div class="in" style="left:631px;top:355px;width:97px;height:16px;background:#fff"></div>
<div class="v" style="right:841px;top:357px;font-size:12px;color:#000;font-weight:normal;letter-spacing:0px;transform:scaleX(0.92);transform-origin:right">0,00</div>
<div class="t" style="left:523px;top:378px;font-size:12px;color:#3C3C3C;letter-spacing:0.4px;">Aile</div>
<div class="in" style="left:631px;top:375px;width:97px;height:16px;background:#fff"></div>
<div class="v" style="right:841px;top:377px;font-size:12px;color:#000;font-weight:normal;letter-spacing:0px;transform:scaleX(0.92);transform-origin:right">0,00</div>
<div class="t" style="left:523px;top:398px;font-size:12px;color:#3C3C3C;letter-spacing:0.4px;">Kasa</div>
<div class="in" style="left:631px;top:395px;width:97px;height:16px;background:#fff"></div>
<div class="v" style="right:841px;top:397px;font-size:12px;color:#000;font-weight:normal;letter-spacing:0px;transform:scaleX(0.92);transform-origin:right">0,00</div>
<div class="t" style="left:523px;top:418px;font-size:12px;color:#3C3C3C;letter-spacing:0.4px;">İhbar</div>
<div class="in" style="left:631px;top:415px;width:97px;height:16px;background:#fff"></div>
<div class="v" style="right:841px;top:417px;font-size:12px;color:#000;font-weight:normal;letter-spacing:0px;transform:scaleX(0.92);transform-origin:right">0,00</div>
<div class="t" style="left:523px;top:438px;font-size:12px;color:#3C3C3C;letter-spacing:0.4px;">Kıdem Tazminatı</div>
<div class="in" style="left:631px;top:435px;width:97px;height:16px;background:#fff"></div>
<div class="v" style="right:841px;top:437px;font-size:12px;color:#000;font-weight:normal;letter-spacing:0px;transform:scaleX(0.92);transform-origin:right">0,00</div>
<div class="t" style="left:523px;top:458px;font-size:12px;color:#3C3C3C;letter-spacing:0.4px;">Giyim</div>
<div class="in" style="left:631px;top:455px;width:97px;height:16px;background:#fff"></div>
<div class="v" style="right:841px;top:457px;font-size:12px;color:#000;font-weight:normal;letter-spacing:0px;transform:scaleX(0.92);transform-origin:right">0,00</div>
<div class="t" style="left:523px;top:478px;font-size:12px;color:#3C3C3C;letter-spacing:0.4px;">Doğum,Askerlik</div>
<div class="in" style="left:631px;top:475px;width:97px;height:16px;background:#fff"></div>
<div class="v" style="right:841px;top:477px;font-size:12px;color:#000;font-weight:normal;letter-spacing:0px;transform:scaleX(0.92);transform-origin:right">0,00</div>
<div class="t" style="left:523px;top:498px;font-size:12px;color:#3C3C3C;letter-spacing:0.4px;">Özel Sig. İşv. Payı</div>
<div class="in" style="left:631px;top:495px;width:97px;height:16px;background:#fff"></div>
<div class="v" style="right:841px;top:497px;font-size:12px;color:#000;font-weight:normal;letter-spacing:0px;transform:scaleX(0.92);transform-origin:right">0,00</div>
<div class="t" style="left:523px;top:518px;font-size:12px;color:#3C3C3C;letter-spacing:0.4px;">Özel Sig. İşçi Payı</div>
<div class="in" style="left:631px;top:515px;width:97px;height:16px;background:#fff"></div>
<div class="v" style="right:841px;top:517px;font-size:12px;color:#000;font-weight:normal;letter-spacing:0px;transform:scaleX(0.92);transform-origin:right">0,00</div>
<div class="t" style="left:523px;top:538px;font-size:12px;color:#3C3C3C;letter-spacing:0.4px;">Sağ. Sig. İşv. Payı</div>
<div class="in" style="left:631px;top:535px;width:97px;height:16px;background:#fff"></div>
<div class="v" style="right:841px;top:537px;font-size:12px;color:#000;font-weight:normal;letter-spacing:0px;transform:scaleX(0.92);transform-origin:right">0,00</div>
<div class="t" style="left:523px;top:558px;font-size:12px;color:#3C3C3C;letter-spacing:0.4px;">Sağ. Sig. İşçi Payı</div>
<div class="in" style="left:631px;top:555px;width:97px;height:16px;background:#fff"></div>
<div class="v" style="right:841px;top:557px;font-size:12px;color:#000;font-weight:normal;letter-spacing:0px;transform:scaleX(0.92);transform-origin:right">0,00</div>
<div class="t" style="left:523px;top:578px;font-size:12px;color:#3C3C3C;letter-spacing:0.4px;">Bir. Emek. İşv.</div>
<div class="in" style="left:631px;top:575px;width:97px;height:16px;background:#fff"></div>
<div class="v" style="right:841px;top:577px;font-size:12px;color:#000;font-weight:normal;letter-spacing:0px;transform:scaleX(0.92);transform-origin:right">0,00</div>
<div class="t" style="left:523px;top:598px;font-size:12px;color:#3C3C3C;letter-spacing:0.4px;">Bir. Emek. İşçi</div>
<div class="in" style="left:631px;top:595px;width:97px;height:16px;background:#fff"></div>
<div class="v" style="right:841px;top:597px;font-size:12px;color:#000;font-weight:normal;letter-spacing:0px;transform:scaleX(0.92);transform-origin:right">0,00</div>
<div class="t" style="left:523px;top:618px;font-size:12px;color:#3C3C3C;letter-spacing:0.4px;">Diğer Yardım 1</div>
<div class="in" style="left:631px;top:615px;width:97px;height:16px;background:#fff"></div>
<div class="v" style="right:841px;top:617px;font-size:12px;color:#000;font-weight:normal;letter-spacing:0px;transform:scaleX(0.92);transform-origin:right">0,00</div>
<div class="t" style="left:523px;top:638px;font-size:12px;color:#3C3C3C;letter-spacing:0.4px;">Diğer Yardım 2</div>
<div class="in" style="left:631px;top:635px;width:97px;height:16px;background:#fff"></div>
<div class="v" style="right:841px;top:637px;font-size:12px;color:#000;font-weight:normal;letter-spacing:0px;transform:scaleX(0.92);transform-origin:right">0,00</div>
<div class="t" style="left:523px;top:658px;font-size:12px;color:#3C3C3C;letter-spacing:0.4px;">Diğer Yardım 3</div>
<div class="in" style="left:631px;top:655px;width:97px;height:16px;background:#fff"></div>
<div class="v" style="right:841px;top:657px;font-size:12px;color:#000;font-weight:normal;letter-spacing:0px;transform:scaleX(0.92);transform-origin:right">0,00</div>
<div class="t" style="left:523px;top:678px;font-size:12px;color:#3C3C3C;letter-spacing:0.4px;">Diğer Yardım</div>
<div class="in" style="left:631px;top:675px;width:97px;height:16px;background:#fff"></div>
<div class="v" style="right:841px;top:677px;font-size:12px;color:#000;font-weight:normal;letter-spacing:0px;transform:scaleX(0.92);transform-origin:right">0,00</div>
<div class="t" style="left:753px;top:238px;font-size:12px;color:#3C3C3C;letter-spacing:0.4px;">Avans</div>
<div class="in" style="left:861px;top:235px;width:98px;height:16px;background:#fff"></div>
<div class="v" style="right:610px;top:237px;font-size:12px;color:#000;font-weight:normal;letter-spacing:0px;transform:scaleX(0.92);transform-origin:right">0,00</div>
<div class="t" style="left:753px;top:258px;font-size:12px;color:#3C3C3C;letter-spacing:0.4px;">İkr. Av</div>
<div class="in" style="left:861px;top:255px;width:98px;height:16px;background:#fff"></div>
<div class="v" style="right:610px;top:257px;font-size:12px;color:#000;font-weight:normal;letter-spacing:0px;transform:scaleX(0.92);transform-origin:right">0,00</div>
<div class="t" style="left:753px;top:278px;font-size:12px;color:#3C3C3C;letter-spacing:0.4px;">İzin Avansı</div>
<div class="in" style="left:861px;top:275px;width:98px;height:16px;background:#fff"></div>
<div class="v" style="right:610px;top:277px;font-size:12px;color:#000;font-weight:normal;letter-spacing:0px;transform:scaleX(0.92);transform-origin:right">0,00</div>
<div class="t" style="left:753px;top:298px;font-size:12px;color:#3C3C3C;letter-spacing:0.4px;">Yak. Av.</div>
<div class="in" style="left:861px;top:295px;width:98px;height:16px;background:#fff"></div>
<div class="v" style="right:610px;top:297px;font-size:12px;color:#000;font-weight:normal;letter-spacing:0px;transform:scaleX(0.92);transform-origin:right">0,00</div>
<div class="t" style="left:753px;top:318px;font-size:12px;color:#3C3C3C;letter-spacing:0.4px;">Bayram Av.</div>
<div class="in" style="left:861px;top:315px;width:98px;height:16px;background:#fff"></div>
<div class="v" style="right:610px;top:317px;font-size:12px;color:#000;font-weight:normal;letter-spacing:0px;transform:scaleX(0.92);transform-origin:right">0,00</div>
<div class="t" style="left:753px;top:338px;font-size:12px;color:#3C3C3C;letter-spacing:0.4px;">Yard.Sandığı</div>
<div class="in" style="left:861px;top:335px;width:98px;height:16px;background:#fff"></div>
<div class="v" style="right:610px;top:337px;font-size:12px;color:#000;font-weight:normal;letter-spacing:0px;transform:scaleX(0.92);transform-origin:right">0,00</div>
<div class="t" style="left:753px;top:358px;font-size:12px;color:#3C3C3C;letter-spacing:0.4px;">Fon Kes</div>
<div class="in" style="left:861px;top:355px;width:98px;height:16px;background:#fff"></div>
<div class="v" style="right:610px;top:357px;font-size:12px;color:#000;font-weight:normal;letter-spacing:0px;transform:scaleX(0.92);transform-origin:right">0,00</div>
<div class="t" style="left:753px;top:378px;font-size:12px;color:#3C3C3C;letter-spacing:0.4px;">Borç</div>
<div class="in" style="left:861px;top:375px;width:98px;height:16px;background:#fff"></div>
<div class="v" style="right:610px;top:377px;font-size:12px;color:#000;font-weight:normal;letter-spacing:0px;transform:scaleX(0.92);transform-origin:right">0,00</div>
<div class="t" style="left:753px;top:398px;font-size:12px;color:#3C3C3C;letter-spacing:0.4px;">İcra</div>
<div class="in" style="left:861px;top:395px;width:98px;height:16px;background:#fff"></div>
<div class="v" style="right:610px;top:397px;font-size:12px;color:#000;font-weight:normal;letter-spacing:0px;transform:scaleX(0.92);transform-origin:right">0,00</div>
<div class="t" style="left:753px;top:418px;font-size:12px;color:#3C3C3C;letter-spacing:0.4px;">Kredi</div>
<div class="in" style="left:861px;top:415px;width:98px;height:16px;background:#fff"></div>
<div class="v" style="right:610px;top:417px;font-size:12px;color:#000;font-weight:normal;letter-spacing:0px;transform:scaleX(0.92);transform-origin:right">0,00</div>
<div class="t" style="left:753px;top:438px;font-size:12px;color:#3C3C3C;letter-spacing:0.4px;">Ceza</div>
<div class="in" style="left:861px;top:435px;width:98px;height:16px;background:#fff"></div>
<div class="v" style="right:610px;top:437px;font-size:12px;color:#000;font-weight:normal;letter-spacing:0px;transform:scaleX(0.92);transform-origin:right">0,00</div>
<div class="t" style="left:753px;top:458px;font-size:12px;color:#3C3C3C;letter-spacing:0.4px;">Sendika</div>
<div class="in" style="left:861px;top:455px;width:98px;height:16px;background:#fff"></div>
<div class="v" style="right:610px;top:457px;font-size:12px;color:#000;font-weight:normal;letter-spacing:0px;transform:scaleX(0.92);transform-origin:right">0,00</div>
<div class="t" style="left:753px;top:478px;font-size:12px;color:#3C3C3C;letter-spacing:0.4px;">Yuvarlama Farkı</div>
<div class="in" style="left:861px;top:475px;width:98px;height:16px;background:#fff"></div>
<div class="v" style="right:610px;top:477px;font-size:12px;color:#000;font-weight:normal;letter-spacing:0px;transform:scaleX(0.92);transform-origin:right">0,00</div>
<div class="t" style="left:753px;top:498px;font-size:12px;color:#3C3C3C;letter-spacing:0.4px;">Ters Bakiye</div>
<div class="in" style="left:861px;top:495px;width:98px;height:16px;background:#fff"></div>
<div class="v" style="right:610px;top:497px;font-size:12px;color:#000;font-weight:normal;letter-spacing:0px;transform:scaleX(0.92);transform-origin:right">0,00</div>
<div class="t" style="left:753px;top:518px;font-size:12px;color:#3C3C3C;letter-spacing:0.4px;">Özel Sigorta</div>
<div class="in" style="left:861px;top:515px;width:98px;height:16px;background:#fff"></div>
<div class="v" style="right:610px;top:517px;font-size:12px;color:#000;font-weight:normal;letter-spacing:0px;transform:scaleX(0.92);transform-origin:right">0,00</div>
<div class="t" style="left:753px;top:538px;font-size:12px;color:#3C3C3C;letter-spacing:0.4px;">Sağlık Sigortası</div>
<div class="in" style="left:861px;top:535px;width:98px;height:16px;background:#fff"></div>
<div class="v" style="right:610px;top:537px;font-size:12px;color:#000;font-weight:normal;letter-spacing:0px;transform:scaleX(0.92);transform-origin:right">0,00</div>
<div class="t" style="left:753px;top:558px;font-size:12px;color:#3C3C3C;letter-spacing:0.4px;">Bir.Emek.Sig.Kes.</div>
<div class="in" style="left:861px;top:555px;width:98px;height:16px;background:#fff"></div>
<div class="v" style="right:610px;top:557px;font-size:12px;color:#000;font-weight:normal;letter-spacing:0px;transform:scaleX(0.92);transform-origin:right">0,00</div>
<div class="t" style="left:753px;top:578px;font-size:12px;color:#3C3C3C;letter-spacing:0.4px;">Diğer Kesinti 1</div>
<div class="in" style="left:861px;top:575px;width:98px;height:16px;background:#fff"></div>
<div class="v" style="right:610px;top:577px;font-size:12px;color:#000;font-weight:normal;letter-spacing:0px;transform:scaleX(0.92);transform-origin:right">0,00</div>
<div class="t" style="left:753px;top:598px;font-size:12px;color:#3C3C3C;letter-spacing:0.4px;">Diğer Kesinti 2</div>
<div class="in" style="left:861px;top:595px;width:98px;height:16px;background:#fff"></div>
<div class="v" style="right:610px;top:597px;font-size:12px;color:#000;font-weight:normal;letter-spacing:0px;transform:scaleX(0.92);transform-origin:right">0,00</div>
<div class="t" style="left:753px;top:618px;font-size:12px;color:#3C3C3C;letter-spacing:0.4px;">Diğer Kesinti 3</div>
<div class="in" style="left:861px;top:615px;width:98px;height:16px;background:#fff"></div>
<div class="v" style="right:610px;top:617px;font-size:12px;color:#000;font-weight:normal;letter-spacing:0px;transform:scaleX(0.92);transform-origin:right">0,00</div>
<div class="t" style="left:753px;top:638px;font-size:12px;color:#3C3C3C;letter-spacing:0.4px;">Diğer Kesinti 4</div>
<div class="in" style="left:861px;top:635px;width:98px;height:16px;background:#fff"></div>
<div class="v" style="right:610px;top:637px;font-size:12px;color:#000;font-weight:normal;letter-spacing:0px;transform:scaleX(0.92);transform-origin:right">0,00</div>
<div class="t" style="left:753px;top:658px;font-size:12px;color:#3C3C3C;letter-spacing:0.4px;">Diğer Kesinti</div>
<div class="in" style="left:861px;top:655px;width:98px;height:16px;background:#fff"></div>
<div class="v" style="right:610px;top:657px;font-size:12px;color:#000;font-weight:normal;letter-spacing:0px;transform:scaleX(0.92);transform-origin:right">0,00</div>
<div class="t" style="left:753px;top:678px;font-size:12px;color:#3C3C3C;letter-spacing:0.4px;">Net Ödenen</div>
<div class="in" style="left:861px;top:675px;width:98px;height:16px;background:#fff"></div>
<div class="v" style="right:610px;top:677px;font-size:12px;color:#000;font-weight:normal;letter-spacing:0px;transform:scaleX(0.92);transform-origin:right">0,00</div>
<div class="b" style="left:2px;top:750px;width:1566px;height:1px;background:#fff"></div>
<div class="b" style="left:2px;top:751px;width:1566px;height:16px;background:#E2E2DA"></div>
<div class="b" style="left:2px;top:767px;width:1566px;height:1px;background:#5a5a5a"></div>
<div class="b" style="left:2px;top:768px;width:1566px;height:4px;background:#C9CDD2"></div>
<div class="t " style="left:26px;top:754px;font-size:12px;color:#333;font-weight:normal;letter-spacing:0.5px;">00001 -</div>
<div class="t " style="left:367px;top:754px;font-size:12px;color:#333;font-weight:normal;letter-spacing:0.5px;">7.1.80 - 1.0.0.36</div>
<div class="t " style="left:780px;top:753px;font-size:13px;color:#2A86B8;font-weight:bold;letter-spacing:0.25px;">www.link.com.tr</div>
<div class="t " style="left:1362px;top:754px;font-size:12px;color:#333;font-weight:normal;letter-spacing:0.15px;">REFİK YAZGAN (ryn)</div>
<div class="t " style="left:1510px;top:754px;font-size:12px;color:#333;font-weight:normal;letter-spacing:0.5px;">08.01.2026</div>
<div class="b" style="left:0px;top:0px;width:1570px;height:1px;background:#c8102e"></div>
<div class="b" style="left:0px;top:0px;width:2px;height:773px;background:#A82030"></div>
<div class="b" style="left:2px;top:97px;width:1px;height:52px;background:#C8B0A8"></div>
<div class="b" style="left:2px;top:170px;width:1px;height:580px;background:#B89890"></div>
<div class="b" style="left:1567px;top:31px;width:1px;height:742px;background:#F4D8D4"></div>
<div class="b" style="left:1568px;top:31px;width:1px;height:742px;background:#FFF2EA"></div>
<div class="b" style="left:1569px;top:0px;width:1px;height:773px;background:#9E1A0A"></div>
<div class="b" style="left:0px;top:772px;width:1570px;height:1px;background:#e00010"></div>
</body></html>
